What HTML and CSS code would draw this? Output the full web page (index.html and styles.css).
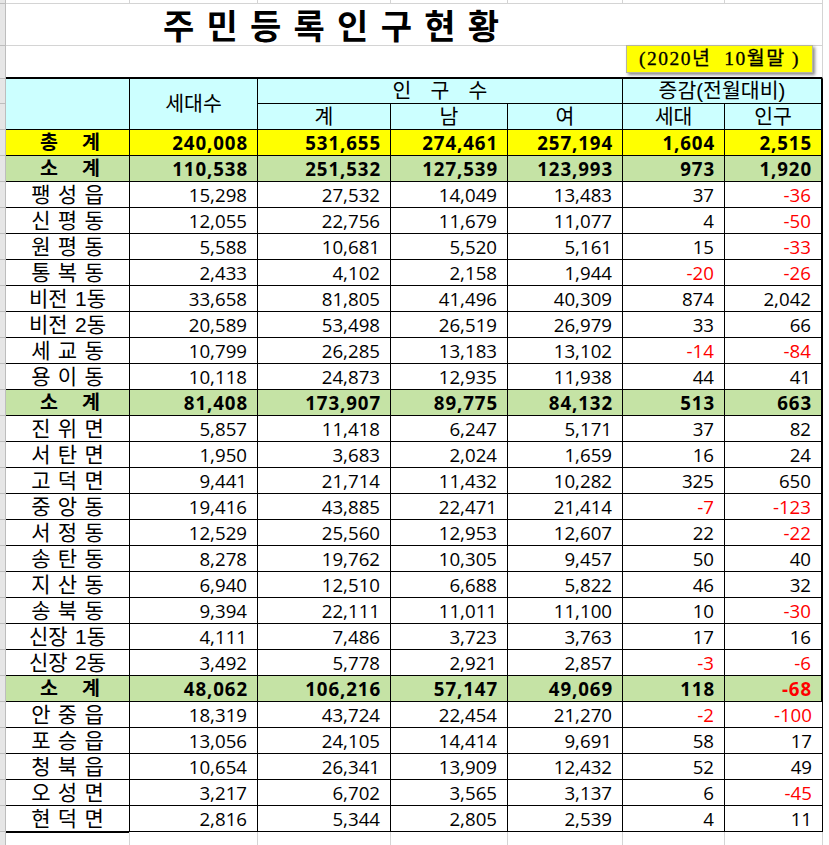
FILE: index.html
```html
<!DOCTYPE html>
<html lang="ko">
<head>
<meta charset="utf-8">
<title>주민등록인구현황</title>
<link rel="stylesheet" href="styles.css">
</head>
<body>
<table class="sheet">
  <colgroup>
    <col class="w0"><col class="w1"><col class="w2"><col class="w3"><col class="w4"><col class="w5"><col class="w6"><col class="w7">
  </colgroup>
  <tr class="top">
    <td class="rh"></td><td class="gl"></td><td class="gl"></td><td class="gl"></td><td class="gl"></td><td class="gl"></td><td class="gl"></td><td class="gl"></td>
  </tr>
  <tr class="titlerow">
    <td class="rh"></td>
    <td class="title" colspan="7">주 민 등 록 인 구 현 황</td>
  </tr>
  <tr class="daterow">
    <td class="rh"></td>
    <td class="datecell" colspan="7"><div class="datewrap"><div class="datebox">(2020년&nbsp; 10월말 )</div></div></td>
  </tr>
  <tr class="hr1">
    <td class="rh"></td>
    <td class="h" rowspan="2"></td>
    <td class="h" rowspan="2">세대수</td>
    <td class="h spaced" colspan="3">인 구 수</td>
    <td class="h g" colspan="2">증감(전월대비)</td>
  </tr>
  <tr class="hr2">
    <td class="rh"></td>
    <td class="h">계</td><td class="h">남</td><td class="h">여</td><td class="h">세대</td><td class="h g">인구</td>
  </tr>
  <tr class="tot">
    <td class="rh"></td><td class="nm"><div class="split"><span>총</span><span>계</span></div></td>
    <td class="n">240,008</td><td class="n">531,655</td><td class="n">274,461</td><td class="n">257,194</td><td class="n">1,604</td><td class="n g">2,515</td>
  </tr>
  <tr class="sub">
    <td class="rh"></td><td class="nm"><div class="split"><span>소</span><span>계</span></div></td>
    <td class="n">110,538</td><td class="n">251,532</td><td class="n">127,539</td><td class="n">123,993</td><td class="n">973</td><td class="n g">1,920</td>
  </tr>
  <tr>
    <td class="rh"></td><td class="nm">팽 성 읍</td>
    <td class="n">15,298</td><td class="n">27,532</td><td class="n">14,049</td><td class="n">13,483</td><td class="n">37</td><td class="n g r">-36</td>
  </tr>
  <tr>
    <td class="rh"></td><td class="nm">신 평 동</td>
    <td class="n">12,055</td><td class="n">22,756</td><td class="n">11,679</td><td class="n">11,077</td><td class="n">4</td><td class="n g r">-50</td>
  </tr>
  <tr>
    <td class="rh"></td><td class="nm">원 평 동</td>
    <td class="n">5,588</td><td class="n">10,681</td><td class="n">5,520</td><td class="n">5,161</td><td class="n">15</td><td class="n g r">-33</td>
  </tr>
  <tr>
    <td class="rh"></td><td class="nm">통 복 동</td>
    <td class="n">2,433</td><td class="n">4,102</td><td class="n">2,158</td><td class="n">1,944</td><td class="n r">-20</td><td class="n g r">-26</td>
  </tr>
  <tr>
    <td class="rh"></td><td class="nm">비전 1동</td>
    <td class="n">33,658</td><td class="n">81,805</td><td class="n">41,496</td><td class="n">40,309</td><td class="n">874</td><td class="n g">2,042</td>
  </tr>
  <tr>
    <td class="rh"></td><td class="nm">비전 2동</td>
    <td class="n">20,589</td><td class="n">53,498</td><td class="n">26,519</td><td class="n">26,979</td><td class="n">33</td><td class="n g">66</td>
  </tr>
  <tr>
    <td class="rh"></td><td class="nm">세 교 동</td>
    <td class="n">10,799</td><td class="n">26,285</td><td class="n">13,183</td><td class="n">13,102</td><td class="n r">-14</td><td class="n g r">-84</td>
  </tr>
  <tr>
    <td class="rh"></td><td class="nm">용 이 동</td>
    <td class="n">10,118</td><td class="n">24,873</td><td class="n">12,935</td><td class="n">11,938</td><td class="n">44</td><td class="n g">41</td>
  </tr>
  <tr class="sub">
    <td class="rh"></td><td class="nm"><div class="split"><span>소</span><span>계</span></div></td>
    <td class="n">81,408</td><td class="n">173,907</td><td class="n">89,775</td><td class="n">84,132</td><td class="n">513</td><td class="n g">663</td>
  </tr>
  <tr>
    <td class="rh"></td><td class="nm">진 위 면</td>
    <td class="n">5,857</td><td class="n">11,418</td><td class="n">6,247</td><td class="n">5,171</td><td class="n">37</td><td class="n g">82</td>
  </tr>
  <tr>
    <td class="rh"></td><td class="nm">서 탄 면</td>
    <td class="n">1,950</td><td class="n">3,683</td><td class="n">2,024</td><td class="n">1,659</td><td class="n">16</td><td class="n g">24</td>
  </tr>
  <tr>
    <td class="rh"></td><td class="nm">고 덕 면</td>
    <td class="n">9,441</td><td class="n">21,714</td><td class="n">11,432</td><td class="n">10,282</td><td class="n">325</td><td class="n g">650</td>
  </tr>
  <tr>
    <td class="rh"></td><td class="nm">중 앙 동</td>
    <td class="n">19,416</td><td class="n">43,885</td><td class="n">22,471</td><td class="n">21,414</td><td class="n r">-7</td><td class="n g r">-123</td>
  </tr>
  <tr>
    <td class="rh"></td><td class="nm">서 정 동</td>
    <td class="n">12,529</td><td class="n">25,560</td><td class="n">12,953</td><td class="n">12,607</td><td class="n">22</td><td class="n g r">-22</td>
  </tr>
  <tr>
    <td class="rh"></td><td class="nm">송 탄 동</td>
    <td class="n">8,278</td><td class="n">19,762</td><td class="n">10,305</td><td class="n">9,457</td><td class="n">50</td><td class="n g">40</td>
  </tr>
  <tr>
    <td class="rh"></td><td class="nm">지 산 동</td>
    <td class="n">6,940</td><td class="n">12,510</td><td class="n">6,688</td><td class="n">5,822</td><td class="n">46</td><td class="n g">32</td>
  </tr>
  <tr>
    <td class="rh"></td><td class="nm">송 북 동</td>
    <td class="n">9,394</td><td class="n">22,111</td><td class="n">11,011</td><td class="n">11,100</td><td class="n">10</td><td class="n g r">-30</td>
  </tr>
  <tr>
    <td class="rh"></td><td class="nm">신장 1동</td>
    <td class="n">4,111</td><td class="n">7,486</td><td class="n">3,723</td><td class="n">3,763</td><td class="n">17</td><td class="n g">16</td>
  </tr>
  <tr>
    <td class="rh"></td><td class="nm">신장 2동</td>
    <td class="n">3,492</td><td class="n">5,778</td><td class="n">2,921</td><td class="n">2,857</td><td class="n r">-3</td><td class="n g r">-6</td>
  </tr>
  <tr class="sub">
    <td class="rh"></td><td class="nm"><div class="split"><span>소</span><span>계</span></div></td>
    <td class="n">48,062</td><td class="n">106,216</td><td class="n">57,147</td><td class="n">49,069</td><td class="n">118</td><td class="n g r">-68</td>
  </tr>
  <tr class="thin">
    <td class="rh"></td><td class="nm">안 중 읍</td>
    <td class="n">18,319</td><td class="n">43,724</td><td class="n">22,454</td><td class="n">21,270</td><td class="n r">-2</td><td class="n g r">-100</td>
  </tr>
  <tr class="thin">
    <td class="rh"></td><td class="nm">포 승 읍</td>
    <td class="n">13,056</td><td class="n">24,105</td><td class="n">14,414</td><td class="n">9,691</td><td class="n">58</td><td class="n g">17</td>
  </tr>
  <tr class="thin">
    <td class="rh"></td><td class="nm">청 북 읍</td>
    <td class="n">10,654</td><td class="n">26,341</td><td class="n">13,909</td><td class="n">12,432</td><td class="n">52</td><td class="n g">49</td>
  </tr>
  <tr class="thin">
    <td class="rh"></td><td class="nm">오 성 면</td>
    <td class="n">3,217</td><td class="n">6,702</td><td class="n">3,565</td><td class="n">3,137</td><td class="n">6</td><td class="n g r">-45</td>
  </tr>
  <tr class="thin last">
    <td class="rh"></td><td class="nm">현 덕 면</td>
    <td class="n">2,816</td><td class="n">5,344</td><td class="n">2,805</td><td class="n">2,539</td><td class="n">4</td><td class="n g">11</td>
  </tr>
  <tr class="filler">
    <td class="rh"></td><td class="gl"></td><td class="gl"></td><td class="gl"></td><td class="gl"></td><td class="gl"></td><td class="gl"></td><td class="gl"></td>
  </tr>
</table>
</body>
</html>
```

FILE: styles.css
```css
html, body {
  margin: 0;
  padding: 0;
  background: #ffffff;
  overflow: hidden;
}

.sheet {
  border-collapse: separate;
  border-spacing: 0;
  table-layout: fixed;
  width: 823px;
  font-family: "Open Sans", "Noto Sans CJK KR", sans-serif;
  color: #000;
}

.w0 { width: 6px; }
.w1 { width: 124px; }
.w2 { width: 128px; }
.w3 { width: 133px; }
.w4 { width: 117px; }
.w5 { width: 115px; }
.w6 { width: 102px; }
.w7 { width: 98px; }

.sheet td {
  padding: 0;
  box-sizing: border-box;
  overflow: visible;
  white-space: nowrap;
}

/* Korean text: a compact Latin primary font keeps the text box inside the row,
   Hangul glyphs come from Noto Sans CJK KR */
.title, .h, .nm {
  font-family: "Liberation Sans", "Noto Sans CJK KR", sans-serif;
}

/* Excel row-header strip on the left */
.rh {
  background: #e6e6e6;
  border-right: 1px solid #bdbdbd;
  border-bottom: 1px solid #bdbdbd;
}

/* plain gridline cells */
.gl {
  border-right: 1px solid #d4d4d4;
  border-bottom: 1px solid #d4d4d4;
}

.top td { height: 4px; }
.filler td { height: 14px; border-bottom: none; }

.titlerow td { height: 42px; }
.title {
  border-right: 1px solid #d4d4d4;
  border-bottom: 1px solid #d4d4d4;
  font-weight: 700;
  font-size: 34px;
  line-height: 36px;
  letter-spacing: 1.4px;
  padding: 5px 0 0 157px !important;
  vertical-align: top;
}

.daterow td { height: 33px; }
.datecell {
  border-right: 1px solid #d4d4d4;
  border-bottom: 2px solid #000;
  vertical-align: top;
}
.datewrap {
  display: flex;
  justify-content: flex-end;
  padding-right: 9px;
  margin-top: -1px;
}
.datebox {
  width: 187px;
  height: 28px;
  box-sizing: border-box;
  background: #ffff00;
  border: 1px solid #b5b5a0;
  box-shadow: 2px 2px 3px rgba(0, 0, 0, 0.45);
  font-family: "Liberation Serif", "Noto Sans CJK KR", serif;
  font-size: 19.5px;
  letter-spacing: 1.5px;
  line-height: 26px;
  text-align: center;
  -webkit-text-stroke: 0.3px #000;
}

/* header */
.hr1 td { height: 25px; }
.hr2 td { height: 26px; }
.h {
  background: #ccffff;
  border-right: 1px solid #000;
  border-bottom: 1px solid #000;
  font-size: 20.5px;
  line-height: 24px;
  text-align: center;
  vertical-align: middle;
}
.spaced { word-spacing: 13.5px; }

/* data rows */
.sheet tr td.n,
.sheet tr td.nm {
  height: 26px;
  border-right: 1px solid #000;
  border-bottom: 1px solid #000;
  vertical-align: middle;
}
.n {
  text-align: right;
  padding-right: 10px !important;
  font-size: 18.7px;
  line-height: 25px;
}
.nm {
  text-align: center;
  font-size: 21px;
  line-height: 25px;
  word-spacing: 1.5px;
}
.sheet tr td.g { border-right-width: 2px; }
.sheet tr.thin td.g { border-right-width: 1px; }
.r { color: #ff0000; }

.tot td.n, .tot td.nm { background: #ffff00; font-weight: 700; }
.sub td.n, .sub td.nm { background: #c5e3a5; font-weight: 700; }
.tot td.n, .sub td.n { letter-spacing: 0.9px; padding-right: 9px !important; }

.split {
  display: flex;
  justify-content: space-between;
  padding: 0 29px 0 34px;
  font-size: 19.5px;
  line-height: 25px;
}

.last td.nm { box-shadow: 0 1px 0 #000; }
```
